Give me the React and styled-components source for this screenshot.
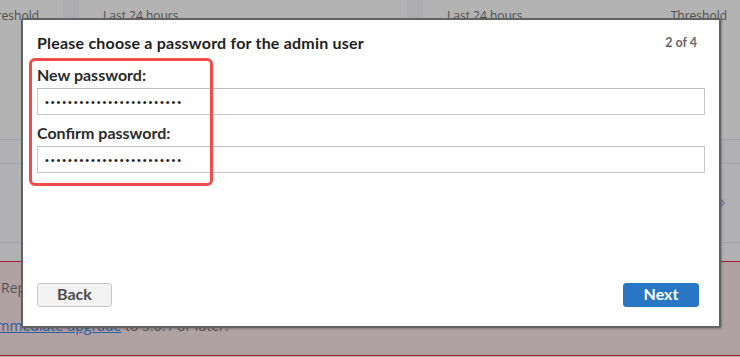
import React from "react";
import styled, { createGlobalStyle } from "styled-components";

const Global = createGlobalStyle`
  html, body { margin: 0; padding: 0; background: #b3b3b3; }
  body { width: 740px; height: 357px; overflow: hidden; }
  * { box-sizing: border-box; }
`;

const Page = styled.div`
  position: relative;
  width: 740px;
  height: 357px;
  overflow: hidden;
  background: #b3b3b3;
  font-family: "Open Sans", "Liberation Sans", sans-serif;
  display: flex;
  flex-direction: column;
`;

const CardsRow = styled.div`
  display: flex;
  gap: 16px;
  margin-left: -265px;
  height: 139px;
  flex-shrink: 0;
  background: #adadb1;
`;

const Card = styled.div`
  width: 328px;
  flex-shrink: 0;
  background: #b3b3b3;
  padding: 8px 24px 0 24px;
`;

const CardLabels = styled.div`
  display: flex;
  justify-content: space-between;
  font-size: 12px;
  line-height: 16px;
  color: #4e4e4e;
`;

const Table = styled.div`
  display: flex;
  flex-direction: column;
  height: 122px;
  flex-shrink: 0;
  border-top: 1px solid #a3a3b4;
  background: #b1b1b4;
`;

const TableRow = styled.div`
  display: flex;
  align-items: center;
  justify-content: flex-end;
  height: ${(p) => p.$h}px;
  padding-right: 14px;
  border-bottom: ${(p) => (p.$line ? "1px solid #a3a3b4" : "none")};
  flex-shrink: 0;
`;

const Alert = styled.div`
  height: 95px;
  flex-shrink: 0;
  background: #b0a1a3;
  border-top: 1px solid #a3202e;
  border-bottom: 1px solid #a3202e;
  padding: 16px 0 0 1px;
  font-size: 14px;
  line-height: 20px;
  color: #555;
`;

const AlertLine = styled.div`
  margin-bottom: 18px;
  margin-left: ${(p) => p.$shift || 0}px;
  white-space: nowrap;
`;

const AlertLink = styled.span`
  color: #2f5e9c;
  text-decoration: underline;
`;

const Modal = styled.div`
  position: absolute;
  left: 21px;
  top: 18px;
  width: 700px;
  height: 310px;
  background: #fff;
  border: 2px solid #626262;
  border-radius: 2px;
  box-shadow: 1px 1px 2px rgba(0, 0, 0, 0.25);
  padding: 12px 14px 19px 14px;
  display: flex;
  flex-direction: column;
  font-family: "Lato", "Liberation Sans", sans-serif;
`;

const Header = styled.div`
  display: flex;
  justify-content: space-between;
  align-items: center;
  height: 20px;
`;

const Title = styled.h1`
  margin: 0;
  font-size: 16px;
  font-weight: 700;
  color: #1e1e1e;
  letter-spacing: 0.2px;
`;

const Step = styled.span`
  font-size: 12.5px;
  font-weight: 700;
  color: #666;
  margin-right: 8px;
`;

const Label = styled.label`
  display: block;
  font-size: 16px;
  font-weight: 700;
  line-height: 20px;
  color: #2b2b2b;
  margin-top: ${(p) => p.$mt}px;
  margin-bottom: 3px;
`;

const Field = styled.input`
  display: block;
  width: 100%;
  height: 27px;
  border: 1px solid #c8c8c8;
  border-top-color: #bdbdbd;
  background: #fff;
  padding: 0 7px;
  font-family: "Liberation Sans", sans-serif;
  font-size: 11px;
  letter-spacing: 1.9px;
  color: #222;
  outline: none;
`;

const Highlight = styled.div`
  position: absolute;
  left: 6px;
  top: 38px;
  width: 184px;
  height: 128px;
  border: 3px solid #f24b4b;
  border-radius: 6px;
  pointer-events: none;
`;

const Footer = styled.div`
  margin-top: auto;
  padding-right: 6px;
  display: flex;
  justify-content: space-between;
`;

const Button = styled.button`
  width: ${(p) => p.$w}px;
  height: 24px;
  border-radius: 3px;
  font-family: "Lato", "Liberation Sans", sans-serif;
  font-size: 16px;
  line-height: 20px;
  font-weight: 700;
  cursor: pointer;
  padding: 0 0 2px 0;
  background: ${(p) => (p.$primary ? "#2777c4" : "#f3f3f3")};
  color: ${(p) => (p.$primary ? "#fff" : "#4a4a4a")};
  border: 1px solid ${(p) => (p.$primary ? "#2777c4" : "#c9c9c9")};
`;

const Chevron = () => (
  <svg width="8" height="12" viewBox="0 0 8 12">
    <path d="M1.5 1.5 L6 6 L1.5 10.5" fill="none" stroke="#8484a6" strokeWidth="2" />
  </svg>
);

export default function App() {
  const pw = "abcdefghijklmnopqrstuvwx";
  return (
    <Page>
      <Global />
      <CardsRow>
        <Card>
          <CardLabels>
            <span>Last 24 hours</span>
            <span>Threshold</span>
          </CardLabels>
        </Card>
        <Card>
          <CardLabels>
            <span>Last 24 hours</span>
          </CardLabels>
        </Card>
        <Card>
          <CardLabels>
            <span>Last 24 hours</span>
            <span>Threshold</span>
          </CardLabels>
        </Card>
      </CardsRow>
      <Table>
        <TableRow $h={24} $line />
        <TableRow $h={79} $line>
          <Chevron />
        </TableRow>
        <TableRow $h={17} />
      </Table>
      <Alert>
        <AlertLine>Replication requires all nodes to run the same version.</AlertLine>
        <AlertLine $shift={-8}>
          <AlertLink>immediate upgrade</AlertLink> to 5.0.1 or later.
        </AlertLine>
      </Alert>
      <Modal>
        <Header>
          <Title>Please choose a password for the admin user</Title>
          <Step>2 of 4</Step>
        </Header>
        <Label $mt={13}>New password:</Label>
        <Field type="password" defaultValue={pw} readOnly />
        <Label $mt={8}>Confirm password:</Label>
        <Field type="password" defaultValue={pw} readOnly />
        <Highlight />
        <Footer>
          <Button $w={75}>Back</Button>
          <Button $w={76} $primary>
            Next
          </Button>
        </Footer>
      </Modal>
    </Page>
  );
}
